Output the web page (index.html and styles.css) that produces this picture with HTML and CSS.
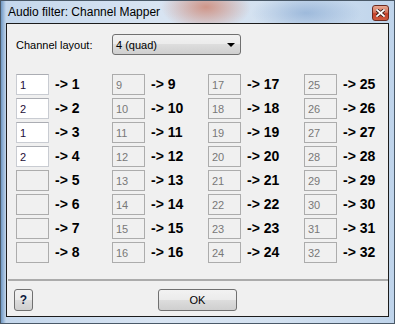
FILE: index.html
```html
<!DOCTYPE html>
<html lang="en">
<head>
    <meta charset="UTF-8">
    <meta name="viewport" content="width=device-width, initial-scale=1.0">
    <title>Audio filter: Channel Mapper</title>
    <link rel="stylesheet" href="styles.css">
</head>
<body>
    <div class="window">
        <div class="titlebar">
            <span class="title">Audio filter: Channel Mapper</span>
            <button class="close" type="button">
                <svg width="9" height="8" viewBox="0 0 9 8">
                    <path d="M1 1 L8 7 M8 1 L1 7" stroke="#3a1a14" stroke-width="3.4" stroke-linecap="square"/>
                    <path d="M1 1 L8 7 M8 1 L1 7" stroke="#ffffff" stroke-width="1.8" stroke-linecap="square"/>
                </svg>
            </button>
        </div>
        <div class="client">
            <div class="layout-row">
                <label class="layout-label" for="layout">Channel layout:</label>
                <div class="combo" id="layout">
                    <span class="combo-text">4 (quad)</span>
                    <span class="combo-arrow"></span>
                </div>
            </div>

            <div class="map-grid">
                <div class="map-cell"><input class="src" value="1"><span class="dst">-&gt; 1</span></div>
                <div class="map-cell"><input class="src" value="2"><span class="dst">-&gt; 2</span></div>
                <div class="map-cell"><input class="src" value="1"><span class="dst">-&gt; 3</span></div>
                <div class="map-cell"><input class="src" value="2"><span class="dst">-&gt; 4</span></div>
                <div class="map-cell"><input class="src" value="" disabled><span class="dst">-&gt; 5</span></div>
                <div class="map-cell"><input class="src" value="" disabled><span class="dst">-&gt; 6</span></div>
                <div class="map-cell"><input class="src" value="" disabled><span class="dst">-&gt; 7</span></div>
                <div class="map-cell"><input class="src" value="" disabled><span class="dst">-&gt; 8</span></div>

                <div class="map-cell"><input class="src" value="9" disabled><span class="dst">-&gt; 9</span></div>
                <div class="map-cell"><input class="src" value="10" disabled><span class="dst">-&gt; 10</span></div>
                <div class="map-cell"><input class="src" value="11" disabled><span class="dst">-&gt; 11</span></div>
                <div class="map-cell"><input class="src" value="12" disabled><span class="dst">-&gt; 12</span></div>
                <div class="map-cell"><input class="src" value="13" disabled><span class="dst">-&gt; 13</span></div>
                <div class="map-cell"><input class="src" value="14" disabled><span class="dst">-&gt; 14</span></div>
                <div class="map-cell"><input class="src" value="15" disabled><span class="dst">-&gt; 15</span></div>
                <div class="map-cell"><input class="src" value="16" disabled><span class="dst">-&gt; 16</span></div>

                <div class="map-cell"><input class="src" value="17" disabled><span class="dst">-&gt; 17</span></div>
                <div class="map-cell"><input class="src" value="18" disabled><span class="dst">-&gt; 18</span></div>
                <div class="map-cell"><input class="src" value="19" disabled><span class="dst">-&gt; 19</span></div>
                <div class="map-cell"><input class="src" value="20" disabled><span class="dst">-&gt; 20</span></div>
                <div class="map-cell"><input class="src" value="21" disabled><span class="dst">-&gt; 21</span></div>
                <div class="map-cell"><input class="src" value="22" disabled><span class="dst">-&gt; 22</span></div>
                <div class="map-cell"><input class="src" value="23" disabled><span class="dst">-&gt; 23</span></div>
                <div class="map-cell"><input class="src" value="24" disabled><span class="dst">-&gt; 24</span></div>

                <div class="map-cell"><input class="src" value="25" disabled><span class="dst">-&gt; 25</span></div>
                <div class="map-cell"><input class="src" value="26" disabled><span class="dst">-&gt; 26</span></div>
                <div class="map-cell"><input class="src" value="27" disabled><span class="dst">-&gt; 27</span></div>
                <div class="map-cell"><input class="src" value="28" disabled><span class="dst">-&gt; 28</span></div>
                <div class="map-cell"><input class="src" value="29" disabled><span class="dst">-&gt; 29</span></div>
                <div class="map-cell"><input class="src" value="30" disabled><span class="dst">-&gt; 30</span></div>
                <div class="map-cell"><input class="src" value="31" disabled><span class="dst">-&gt; 31</span></div>
                <div class="map-cell"><input class="src" value="32" disabled><span class="dst">-&gt; 32</span></div>
            </div>

            <div class="separator"></div>

            <div class="buttons">
                <button class="btn help" type="button">?</button>
                <button class="btn ok" type="button">OK</button>
            </div>
        </div>
    </div>
</body>
</html>
```
FILE: styles.css
```css
body {
    margin: 0;
    background-color: #b9cfe6;
    font-family: "Liberation Sans", Arial, sans-serif;
}
.window {
    width: 395px;
    height: 324px;
    box-sizing: border-box;
    border: 1px solid #4a5968;
    padding: 0 5px 6px 5px;
    background:
        radial-gradient(ellipse 45px 24px at 205px 6px, rgba(205, 130, 110, 0.8), rgba(205, 130, 110, 0)),
        radial-gradient(ellipse 55px 20px at 305px 12px, rgba(110, 150, 200, 0.5), rgba(110, 150, 200, 0)),
        linear-gradient(to right, #6f98c4 0, #c4d7ec 5px, #d8e4f2 40%, #d3e1f0 70%, #bfd4eb 100%);
}
.titlebar {
    height: 22px;
    display: flex;
    align-items: flex-start;
    justify-content: space-between;
}
.title {
    font-size: 12px;
    color: #000;
    padding: 4px 0 0 2px;
    line-height: 14px;
}
.close {
    width: 17px;
    height: 16px;
    margin-top: 4px;
    padding: 0;
    border: 1px solid #6b2a20;
    border-radius: 3px;
    background: linear-gradient(#e8a892 0, #d4745c 45%, #c2402a 55%, #cf5a3e 100%);
    display: flex;
    align-items: center;
    justify-content: center;
}
.client {
    height: 294px;
    box-sizing: border-box;
    border: 1px solid #1c1c1c;
    background-color: #f0f0f0;
    font-size: 11px;
}
.layout-row {
    display: flex;
    align-items: center;
    padding: 10px 0 0 9px;
}
.layout-label {
    width: 96px;
    color: #000;
}
.combo {
    width: 129px;
    height: 21px;
    box-sizing: border-box;
    border: 1px solid #707070;
    border-radius: 3px;
    background: linear-gradient(#f2f2f2 0, #ebebeb 50%, #dddddd 50%, #cfcfcf 100%);
    display: flex;
    align-items: center;
    justify-content: space-between;
    padding: 0 5px 0 3px;
}
.combo-arrow {
    width: 0;
    height: 0;
    border-left: 4px solid transparent;
    border-right: 4px solid transparent;
    border-top: 4px solid #000;
}
.map-grid {
    display: grid;
    grid-template-rows: repeat(8, 21px);
    grid-template-columns: repeat(4, 96px);
    grid-auto-flow: column;
    row-gap: 3px;
    margin: 19px 0 0 9px;
}
.map-cell {
    display: flex;
    align-items: center;
}
.src {
    width: 33px;
    height: 21px;
    box-sizing: border-box;
    margin: 0;
    padding: 0 3px;
    border: 1px solid #c9ccd2;
    border-top-color: #abadb3;
    background-color: #fff;
    font-family: "Liberation Sans", Arial, sans-serif;
    font-size: 11px;
    color: #1e0e38;
}
.src:disabled {
    background-color: #f0f0f0;
    border-color: #acacac;
    color: #787878;
}
.dst {
    margin-left: 6px;
    font-size: 14px;
    font-weight: bold;
    color: #000;
    line-height: 21px;
}
.separator {
    height: 2px;
    margin: 16px 0 0 1px;
    background-color: #ababab;
}
.buttons {
    display: flex;
    margin-top: 8px;
}
.btn {
    height: 22px;
    margin: 0;
    padding: 0;
    border: 1px solid #707070;
    border-radius: 3px;
    background: linear-gradient(#f2f2f2 0, #ebebeb 50%, #dddddd 50%, #cfcfcf 100%);
    font-family: "Liberation Sans", Arial, sans-serif;
    font-size: 11px;
    color: #000;
}
.help {
    width: 19px;
    margin-left: 7px;
    font-size: 12px;
    font-weight: bold;
    color: #0c1a40;
}
.ok {
    width: 79px;
    margin-left: 125px;
}
```
